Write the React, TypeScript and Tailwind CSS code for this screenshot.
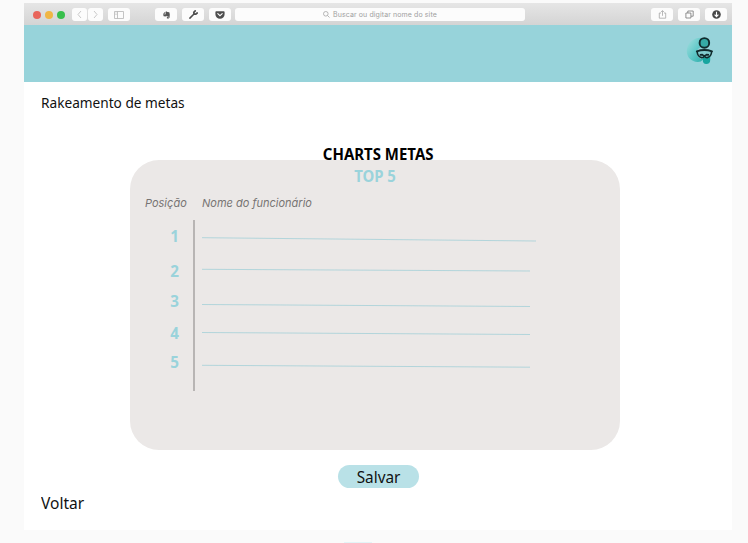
import type { ReactNode } from "react";

type Row = { position: number; height: string; from: number; to: number; end: number };

const rows: Row[] = [
  { position: 1, height: "h-[35px]", from: 11.7, to: 15, end: 334 },
  { position: 2, height: "h-[30px]", from: 8.3, to: 10, end: 328 },
  { position: 3, height: "h-[32px]", from: 13.5, to: 15.5, end: 328 },
  { position: 4, height: "h-[29px]", from: 9.5, to: 11.5, end: 328 },
  { position: 5, height: "h-[20px]", from: 13.3, to: 15.2, end: 328 },
];

function BarButton({ className = "", children }: { className?: string; children: ReactNode }) {
  return (
    <button className={`flex h-[13px] items-center justify-center rounded-[3px] bg-[#fcfcfc] ${className}`}>
      {children}
    </button>
  );
}

function BrowserBar() {
  return (
    <div className="flex h-[22px] items-center bg-linear-to-b from-[#e6e6e6] to-[#d4d4d4] pl-[9px] pt-px">
      <div className="flex gap-[4px]">
        <span className="size-2 rounded-full bg-[#e8655b]" />
        <span className="size-2 rounded-full bg-[#f0b645]" />
        <span className="size-2 rounded-full bg-[#38bf4c]" />
      </div>
      <div className="ml-[7px] flex gap-px">
        <BarButton className="w-[15px]">
          <svg className="size-[9px]" viewBox="0 0 9 9" fill="none" stroke="#c9c9c9"><path d="M6 1 3 4.5 6 8" /></svg>
        </BarButton>
        <BarButton className="w-[15px]">
          <svg className="size-[9px]" viewBox="0 0 9 9" fill="none" stroke="#c9c9c9"><path d="m3 1 3 3.5L3 8" /></svg>
        </BarButton>
      </div>
      <BarButton className="ml-[5px] w-[22px]">
        <svg className="h-2 w-[10px]" viewBox="0 0 10 8" fill="none" stroke="#b5b5b5" strokeWidth=".8"><path d="M.5.5h9v7h-9zM3.5.5v7M1.5 2h1M1.5 3.5h1" /></svg>
      </BarButton>
      <BarButton className="ml-[25px] w-[22px]">
        <svg className="h-2 w-[7px]" viewBox="1 0 7 9" preserveAspectRatio="none" fill="#555"><path d="M3.3.8 1 3.1h2.3zM3.8.5h1l.5.6 2 .4.5 2.5-.3 3.5-.9 1H4.9V6.7h1v.8h.5V6.2H4.8l-.6-.8-.5.7-2-.3L1 3.6h2.8z" /></svg>
      </BarButton>
      <BarButton className="ml-[5px] w-[22px]">
        <svg className="size-[9px]" viewBox="0 0 9 9" fill="none" stroke="#4e4e4e" strokeLinecap="round"><path d="M.9 8.1 5 4" strokeWidth="1.5" /><path d="M6.2.9 4.8 2.3l.2 1.8 1.8.1L8.2 3" strokeWidth="1.7" /></svg>
      </BarButton>
      <BarButton className="ml-[5px] w-[22px]">
        <svg className="h-2 w-[10px]" viewBox="0 0 10 8"><path d="M1.3.2h7.4q.9 0 .9.9v2.2a4.6 4.5 0 0 1-9.2 0V1.1q0-.9.9-.9" fill="#4e4e4e" /><path d="m2.8 2.7 2.2 2 2.2-2" fill="none" stroke="#fff" strokeWidth="1.1" strokeLinecap="round" /></svg>
      </BarButton>
      <div className="ml-[4px] flex h-[13px] w-[290px] items-center justify-center gap-[3px] rounded-[3px] bg-[#fcfcfc] font-['Inter','Liberation_Sans',sans-serif] text-[7px] leading-[13px] tracking-[0.1px] text-[#a0a0a0]">
        <svg className="size-[7px]" viewBox="0 0 7 7" fill="none" stroke="#a5a5a5" strokeWidth=".8"><circle cx="2.8" cy="2.8" r="2.3" /><path d="m4.5 4.5 2 2" /></svg>
        <span className="whitespace-nowrap">Buscar ou digitar nome do site</span>
      </div>
      <div className="ml-auto mr-[5px] flex gap-[5px]">
        <BarButton className="w-[22px]">
          <svg className="size-[9px]" viewBox="0 0 9 9" fill="none" stroke="#a6a6a6" strokeWidth=".8"><path d="M3 3H1.3v5.2h6.4V3H6M4.5 5.8V.7M3 2.1 4.5.6 6 2.1" /></svg>
        </BarButton>
        <BarButton className="w-[22px]">
          <svg className="size-[9px]" viewBox="0 0 9 9" fill="none" stroke="#777" strokeWidth=".8"><path d="M.9 3h5v5h-5zM2.8 3V1h5.4v5.2H6" /></svg>
        </BarButton>
        <BarButton className="w-[22px]">
          <svg className="size-[9px]" viewBox="0 0 9 9"><circle cx="4.5" cy="4.5" r="4.3" fill="#484848" /><path d="M4.5 1.8v4.5M2.6 4.6l1.9 2 1.9-2" fill="none" stroke="#fff" strokeWidth="1.1" /></svg>
        </BarButton>
      </div>
    </div>
  );
}

function Logo() {
  return (
    <svg className="h-[30px] w-[28px]" viewBox="0 0 28 30" fill="none">
      <defs>
        <linearGradient id="swirl" x1="0" y1="0" x2="1" y2="1">
          <stop stopColor="#a5dfdf" />
          <stop offset=".5" stopColor="#65caca" />
          <stop offset="1" stopColor="#2bada9" />
        </linearGradient>
      </defs>
      <path d="M16 1.8C8 1 .8 7 .8 15c0 7 6 12.4 14 10.6l3-2.6c-5 0-7.6-3-6.6-7 0-3 2-5 6-5z" fill="url(#swirl)" />
      <path d="M16 18h8.2v6q0 4-4 4-3.4 0-3.4-4z" fill="#17a59f" />
      <circle cx="18.4" cy="6.9" r="4.8" fill="#36a9a5" stroke="#102a2c" strokeWidth="1.9" />
      <path d="M10.8 14.9c4.4-1.4 10.8-1.4 15.2 0 0 3.8-2.2 6.8-4.8 7.1-1.3.1-2.1-.5-2.8-1.5-.7 1-1.5 1.6-2.8 1.5-2.6-.3-4.8-3.3-4.8-7.1Z" fill="#82cccf" />
      <path d="M10.8 15.3c4.4-1.5 10.8-1.5 15.2 0" stroke="#102a2c" strokeWidth="1.9" strokeLinecap="round" />
      <path d="M11.1 15.2c.3 3.6 2.2 6 4.5 6.4 1.3.1 2.1-.5 2.8-1.5.7 1 1.5 1.6 2.8 1.5 2.3-.4 4.2-2.8 4.5-6.4M13.8 18.9l2.4-.3 2.2 1.6 2.2-1.6 2.4.3" stroke="#102a2c" strokeWidth="1.6" />
    </svg>
  );
}

export default function App() {
  return (
    <div className="flex h-[543px] w-[748px] flex-col overflow-hidden bg-[#fafafa] pl-6 pt-[3px] font-['Noto_Sans','Open_Sans',sans-serif] text-[#111]">
      <main className="flex h-[527px] w-[708px] flex-col bg-white">
        <BrowserBar />
        <header className="flex h-[57px] shrink-0 justify-end bg-[#97d3da] pr-[18px] pt-[11px]">
          <Logo />
        </header>
        <h1 className="ml-[17px] mt-[10px] h-5 origin-left scale-x-[0.91] whitespace-nowrap text-[15px] leading-5">Rakeamento de metas</h1>
        <h2 className="z-10 mt-[32px] h-5 text-center text-[16px] font-bold leading-5 text-black">
          <span className="inline-block scale-x-[0.935]">CHARTS METAS</span>
        </h2>
        <section className="-mt-[4px] ml-[106px] h-[290px] w-[490px] shrink-0 rounded-[29px] bg-[#ebe8e7] pt-[6px]">
          <h3 className="h-5 scale-x-[0.93] text-center text-[16px] font-bold leading-5 text-[#9ad3db]">TOP 5</h3>
          <div className="mt-[7px] flex h-5 whitespace-nowrap pl-[15px] font-['Inter',sans-serif] text-[11px] italic leading-5 text-[#777473]">
            <span className="w-[57px]">Posição</span>
            <span>Nome do funcionário</span>
          </div>
          <div className="mt-[7px] flex h-[171px]">
            <div className="w-[65px] border-r-2 border-[#b8b5b4] pt-[6px] text-center text-[16px] font-bold leading-5 text-[#9ad3db]">
              {rows.map((row) => (
                <div key={row.position} className={`${row.height} pl-[26px]`}>
                  <span className="inline-block scale-x-[0.95]">{row.position}</span>
                </div>
              ))}
            </div>
            <div className="pl-[7px] pt-[6px]">
              {rows.map((row) => (
                <div key={row.position} className={row.height}>
                  <svg className="h-5 w-[340px]" viewBox="0 0 340 20">
                    <path d={`M0 ${row.from} L${row.end} ${row.to}`} stroke="#acd3d9" strokeWidth=".9" />
                  </svg>
                </div>
              ))}
            </div>
          </div>
        </section>
        <button className="ml-[314px] mt-[15px] h-[23px] w-[81px] shrink-0 rounded-full bg-[#b9e1e7] text-[16.5px] leading-[23px]">
          <span className="inline-block scale-x-[0.93]">Salvar</span>
        </button>
        <a className="ml-[17px] mt-[4px] w-fit origin-left scale-x-[0.94] text-[16.5px] leading-[22px]">Voltar</a>
      </main>
      <div className="ml-[320px] mt-auto h-px w-7 bg-[#e3f4f7]" />
    </div>
  );
}
